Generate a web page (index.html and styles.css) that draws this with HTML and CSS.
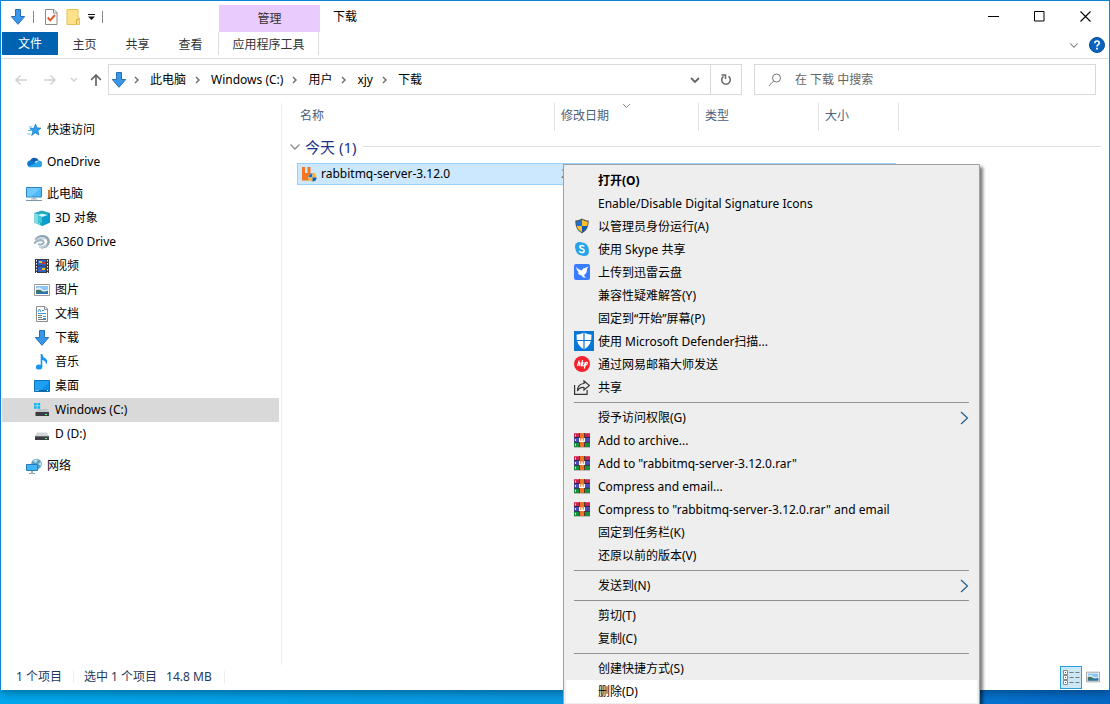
FILE: index.html
```
<!DOCTYPE html>
<html lang="zh-CN">
<head>
<meta charset="utf-8">
<title>下载</title>
<link rel="stylesheet" href="styles.css">
</head>
<body>
<svg class="defs" aria-hidden="true">
  <defs>
    <symbol id="down" viewBox="0 0 16 16"><path d="M5.5.5h5v7h4.2L8 15.3 1.3 7.5h4.2z" fill="#3a96e8" stroke="#2470b8"/></symbol>
    <symbol id="crumb" viewBox="0 0 8 8"><path d="M2 1l3 3-3 3" fill="none" stroke="#6a6a6a" stroke-width="1.4"/></symbol>
    <symbol id="chev" viewBox="0 0 12 8"><path d="M1.500 1.500L6 6l4.500-4.500" fill="none" stroke="currentColor" stroke-width="1.300"/></symbol>
    <symbol id="next" viewBox="0 0 9 14"><path d="M1 1l6.500 6L1 13" fill="none" stroke="#1c5f94" stroke-width="1.200"/></symbol>
    <symbol id="drive" viewBox="0 0 16 16"><path d="M3 6.500h10l2 3.500H1z" fill="#d3d5d9"/><path d="M1 10h14v4H1z" fill="#3b3d42"/><path d="M1 10h14v1H1z" fill="#686b70"/><path d="M11 12h2v1h-2z" fill="#5dff6a"/></symbol>
    <symbol id="photo" viewBox="0 0 16 16"><path d="M.5 2.500h15v11H.5z" fill="#fff" stroke="#9a9a9a"/><path d="M2 4h12v8H2z" fill="#8cc4f4"/><path d="M2 6.500q4-2 6 .5t6 0V9H2z" fill="#dcecf8"/><path d="M2 8q4-1 6 1t6-.5V12H2z" fill="#3e7566"/><path d="M2 11l12-1v2H2z" fill="#2b74b8"/></symbol>
    <symbol id="shield" viewBox="0 0 16 16"><path d="M8 .6Q5 2.600 1.300 2.600C1.200 9 3.500 13 8 15.400 12.500 13 14.800 9 14.700 2.600 11 2.600 8 .6 8 .6z" fill="#555"/><path d="M8 1.800Q5.500 3.500 2.300 3.700q0 2.300.5 4.300H8z" fill="#1a72d4"/><path d="M8 1.800q2.500 1.700 5.700 1.900 0 2.300-.5 4.300H8z" fill="#fdbf2d"/><path d="M2.800 8q1.200 4.200 5.200 6.300V8z" fill="#fdbf2d"/><path d="M13.200 8Q12 12.200 8 14.300V8z" fill="#0d5bb5"/></symbol>
    <symbol id="rar" viewBox="0 0 16 16"><path d="M0 1h16v4.700H0z" fill="#c8234f"/><path d="M0 5.700h16v4.600H0z" fill="#4b4db5"/><path d="M0 10.300h16V15H0z" fill="#178f3b"/><path d="M0 1h16v1H0z" fill="#e04a70"/><path d="M0 5h16v1H0zM0 9.700h16v1H0z" fill="#2b244c"/><path d="M6 1h4v14H6z" fill="#ed7428"/><path d="M5 1h1v14H5zM10 1h1v14h-1z" fill="#57372e"/><path d="M1 2.500h1v2H1zM1 7h1v2H1zM1 11.800h1v2H1z" fill="#ffe36a"/><path d="M5 6h1.200v2.800h1V6.500h1.600v2.300h1V6H11v4H5z" fill="#fff"/><path d="M0 15h16v.6H0z" fill="#9b9b9b"/></symbol>
  </defs>
</svg>

<main class="window">
  <header class="titlebar">
    <div class="quick">
      <svg class="i16"><use href="#down"/></svg>
      <i class="tick"></i>
      <button class="plain" aria-label="属性"><svg class="i16" viewBox="0 0 16 16"><path d="M2.500.5h8.500l3 3v12H2.500z" fill="#fff" stroke="#8a8a8a"/><path d="M10.500.5v3.500h3.500" fill="none" stroke="#8a8a8a"/><path d="M4.700 8.500l2.500 2.800L12 6" fill="none" stroke="#e05a28" stroke-width="2"/></svg></button>
      <button class="plain" aria-label="新建文件夹"><svg class="i16" viewBox="0 0 16 16"><path d="M2 .5h11V9h1.500v6.500H2z" fill="#fde08a" stroke="#e9c254"/><path d="M11.500 15V10.500h2.500" fill="none" stroke="#d9ad3c"/></svg></button>
      <button class="plain" aria-label="自定义快速访问工具栏"><svg class="drop" viewBox="0 0 7 6"><path d="M0 0h7v1H0zM0 2.500h7L3.500 6z" fill="#111"/></svg></button>
      <i class="tick"></i>
    </div>
    <div class="context">管理</div>
    <h1 class="title">下载</h1>
    <div class="controls">
      <button class="plain" aria-label="最小化"><svg viewBox="0 0 11 11"><path d="M0 5.500h11" stroke="#000"/></svg></button>
      <button class="plain" aria-label="最大化"><svg viewBox="0 0 11 11"><path d="M.5.5h9.500v9.500H.5z" fill="none" stroke="#000"/></svg></button>
      <button class="plain" aria-label="关闭"><svg viewBox="0 0 11 11"><path d="M.5.5l10 10M10.500.5l-10 10" stroke="#000" stroke-width="1.100"/></svg></button>
    </div>
  </header>

  <nav class="tabs">
    <button class="tab file-tab">文件</button>
    <button class="tab">主页</button>
    <button class="tab">共享</button>
    <button class="tab">查看</button>
    <button class="tab tool-tab">应用程序工具</button>
    <div class="tabs-end">
      <button class="plain" aria-label="展开功能区"><svg class="chev-small grey"><use href="#chev"/></svg></button>
      <button class="plain" aria-label="帮助"><svg class="i16" viewBox="0 0 16 16"><circle cx="8" cy="8" r="7.500" fill="#0a64bd" stroke="#084d93"/><path d="M5.800 6.200q0-2.200 2.200-2.200t2.200 2q0 1.200-1.200 1.900T8 9.700" fill="none" stroke="#fff" stroke-width="1.600"/><path d="M7.100 10.800h1.800v1.700H7.100z" fill="#fff"/></svg></button>
    </div>
  </nav>

  <div class="address">
    <div class="history">
      <button class="plain faint" aria-label="后退"><svg class="i12" viewBox="0 0 12 12"><path d="M12 6H1M5.500 1.500L1 6l4.500 4.500" fill="none" stroke="currentColor" stroke-width="1.400"/></svg></button>
      <button class="plain faint" aria-label="前进"><svg class="i12" viewBox="0 0 12 12"><path d="M0 6h11M6.500 1.500L11 6l-4.500 4.500" fill="none" stroke="currentColor" stroke-width="1.400"/></svg></button>
      <button class="plain faint" aria-label="最近浏览的位置"><svg class="tiny" viewBox="0 0 8 6"><path d="M1 1l3 3 3-3" fill="none" stroke="currentColor" stroke-width="1.400"/></svg></button>
      <button class="plain" aria-label="上移"><svg class="i12" viewBox="0 0 12 12"><path d="M6 12V1M1.200 5.800L6 1l4.800 4.800" fill="none" stroke="#666" stroke-width="1.700"/></svg></button>
    </div>
    <div class="path">
      <svg class="i16"><use href="#down"/></svg>
      <svg class="crumb"><use href="#crumb"/></svg>
      <a href="#pc">此电脑</a>
      <svg class="crumb"><use href="#crumb"/></svg>
      <a href="#c">Windows (C:)</a>
      <svg class="crumb"><use href="#crumb"/></svg>
      <a href="#users">用户</a>
      <svg class="crumb"><use href="#crumb"/></svg>
      <a href="#xjy">xjy</a>
      <svg class="crumb"><use href="#crumb"/></svg>
      <a href="#downloads">下载</a>
      <button class="plain expand" aria-label="以前的位置"><svg class="i10" viewBox="0 0 10 10"><path d="M1 3l4 4 4-4" fill="none" stroke="#666" stroke-width="1.800"/></svg></button>
      <button class="plain refresh" aria-label="刷新"><svg class="i12" viewBox="0 0 12 12"><path d="M8.500 2.400A4.300 4.300 0 1 1 3.500 2.400" fill="none" stroke="#6a6a6a" stroke-width="1.600"/><path d="M1.500 1h4v4" fill="none" stroke="#6a6a6a" stroke-width="1.500"/></svg></button>
    </div>
    <label class="search">
      <svg class="i14" viewBox="0 0 14 14"><circle cx="8.500" cy="5" r="4" fill="none" stroke="#777"/><path d="M5.600 8L1 12.800" stroke="#777"/></svg>
      <input type="search" aria-label="搜索" placeholder="在 下载 中搜索">
    </label>
  </div>

  <div class="body">
    <nav class="tree">
      <a href="#quick"><svg class="i16" viewBox="0 0 16 16"><path d="M9.500 2l1.500 3.900 4 .2-3.200 2.600 1.200 4.300-3.700-2.200-3.600 2.600 1.200-4.200L3.900 6.600 8 6.200z" fill="#2ba0ea" stroke="#1277c4" stroke-width=".7"/><path d="M3 5h3M2 8.500h3.500M1.500 12h3" stroke="#58bdf4"/></svg>快速访问</a>
      <a class="gap" href="#onedrive"><svg class="i16" viewBox="0 0 16 16"><path d="M4 7a4.700 4.700 0 0 1 8.800-.5Q8 7 4 12z" fill="#0a5fb4"/><path d="M3.700 6.500Q7 6 11 10l-7 3.300A3.500 3.500 0 0 1 3.700 6.500z" fill="#0f78d0"/><path d="M2 12.500L9 9.500l3.800-3a3.400 3.400 0 0 1 .2 6.800H3.500z" fill="#2aa5ea"/></svg>OneDrive</a>
      <a class="gap" href="#pc"><svg class="i16" viewBox="0 0 16 16"><path d="M.5 1.500h15v9.500H.5z" fill="#4db9fa" stroke="#2c84be"/><path d="M1 2h14L5 10.500H1z" fill="#7bd0ff" opacity=".7"/><path d="M7 11.500h2V13H7z" fill="#8ab"/><path d="M0 14.500h16" stroke="#8195aa"/><path d="M5 13h6" stroke="#9cb0c4"/></svg>此电脑</a>
      <a class="sub" href="#3d"><svg class="i16" viewBox="0 0 16 16"><path d="M0 3l8-2.500L16 3v9.500L8 16 0 12.500z" fill="#26aabd"/><path d="M0 3l6 2v10L0 12.500z" fill="#82dbe2"/><path d="M16 3v9.500L8 16V5.500z" fill="#0b9dcb"/><path d="M4 5l4-1.200L14 5 8 7z" fill="#d8fbfb"/><path d="M4 5l4 2v5l-4 2z" fill="#42c8d4"/></svg>3D 对象</a>
      <a class="sub" href="#a360"><svg class="i16" viewBox="0 0 16 16"><path d="M1.500 6Q5 1.500 10.500 2.500 15 4 14.500 8.500 13 13.500 7 13.500" fill="none" stroke="#8fa5b4" stroke-width="2.600"/><path d="M2 6.500Q6 2.500 11.500 5" fill="none" stroke="#cbd8e0" stroke-width="1.800"/><path d="M0 9.500Q4 5 8.500 6.500q2.500 1.500 0 3.500Q5 11.500 4.500 9.500" fill="none" stroke="#9db1be" stroke-width="2"/><path d="M5 13q5 1 8-3" fill="none" stroke="#c3d1da" stroke-width="1.500"/></svg>A360 Drive</a>
      <a class="sub" href="#video"><svg class="i16" viewBox="0 0 16 16"><path d="M1 1h14v14H1z" fill="#38393b"/><path d="M4 2h8v5.500H4zM4 8.500h8V14H4z" fill="#2d62cc"/><path d="M5 3h3v2H5zM8 10h3v2H8z" fill="#e0be25"/><path d="M8 4h3v2H8zM5 12h3v1H5z" fill="#c8372e"/><path d="M2.500 2v13M13.500 2v13" stroke="#f2f2f2" stroke-dasharray="1.500 1.500"/></svg>视频</a>
      <a class="sub" href="#pictures"><svg class="i16"><use href="#photo"/></svg>图片</a>
      <a class="sub" href="#docs"><svg class="i16" viewBox="0 0 16 16"><path d="M2.500.5h8.500l2.500 2.500v12.500h-11z" fill="#fff" stroke="#8d8d8d"/><path d="M10.500.5v3h3" fill="none" stroke="#8d8d8d"/><path d="M4 6l1.500-3L7 6M8 4.500h2M4 7.500h8M9 12.500h3M9 10.500h3" fill="none" stroke="#3597dd"/><path d="M4 9.500h4M4 11.500h4M4 13.500h8" stroke="#777"/></svg>文档</a>
      <a class="sub" href="#downloads"><svg class="i16"><use href="#down"/></svg>下载</a>
      <a class="sub" href="#music"><svg class="i16" viewBox="0 0 16 16"><ellipse cx="5" cy="13" rx="3.200" ry="2.600" fill="#1597f2"/><path d="M6.700 13V0h1.500q.5 3 3 4.300T13 9l-1 1.500Q12 6.500 8.300 6V13z" fill="#1597f2"/></svg>音乐</a>
      <a class="sub" href="#desktop"><svg class="i16" viewBox="0 0 16 16"><path d="M.5 2.500h15v11H.5z" fill="#1ea1f5" stroke="#0a71b9"/><path d="M6 13L15 4v9z" fill="#0e91e8"/><path d="M1 12.500h14" stroke="#07619e"/><path d="M1.500 12.500h3M13 12.500h1" stroke="#fff" stroke-dasharray="1 1"/></svg>桌面</a>
      <a class="sub current" href="#c"><svg class="i16" viewBox="0 0 16 16"><path d="M4 7h10l1 3H1.500z" fill="#c3c5c9"/><path d="M1.500 10h13.500v4H1.500z" fill="#3b3d42"/><path d="M11 12h2v1h-2z" fill="#5dff6a"/><path d="M0 1h2.700v2.500H0zM3.500 1h2.700v2.500H3.500zM0 4.300h2.700v2.500H0zM3.500 4.300h2.700v2.500H3.500z" fill="#0ab4ee"/></svg>Windows (C:)</a>
      <a class="sub" href="#d"><svg class="i16"><use href="#drive"/></svg>D (D:)</a>
      <a class="gap" href="#network"><svg class="i16" viewBox="0 0 16 16"><circle cx="10.500" cy="6" r="5.300" fill="#5d9fc0"/><path d="M7 3q3-3 5-1l-2 3zM12 6l3-2v4z" fill="#c2e0e8"/><path d="M.5 6.500h11v6H.5z" fill="#42b4f8" stroke="#267eb8"/><path d="M3 15.500h6" stroke="#8fa6b6"/><path d="M5 13h2v2H5z" fill="#9fb5c4"/></svg>网络</a>
    </nav>

    <table class="files">
      <thead>
        <tr>
          <th scope="col">名称</th>
          <th scope="col">修改日期<svg class="sort"><use href="#chev"/></svg></th>
          <th scope="col">类型</th>
          <th scope="col">大小</th>
        </tr>
      </thead>
      <tbody>
        <tr class="group"><th scope="rowgroup"><svg class="chev grey"><use href="#chev"/></svg>今天 (1)</th></tr>
        <tr class="file">
          <td><svg class="i16" viewBox="0 0 16 16"><path d="M1 1h3v6h2.500V1h3v6H14v7.500H1z" fill="#f5761f"/><circle cx="11.500" cy="11.500" r="4.300" fill="#d7e3ee"/><path d="M11.500 7.500a4 4 0 0 0-4 4h4z" fill="#1a72d4"/><path d="M11.500 7.500a4 4 0 0 1 4 4h-4zM7.500 11.500a4 4 0 0 0 4 4v-4z" fill="#fbbd2b"/><path d="M15.500 11.500a4 4 0 0 1-4 4v-4z" fill="#0d5bb5"/></svg>rabbitmq-server-3.12.0</td>
          <td class="date">2</td><td></td><td></td>
        </tr>
      </tbody>
    </table>
  </div>

  <footer class="status">
    <span class="count">1 个项目</span>
    <span class="picked">选中 1 个项目</span>
    <span class="size">14.8 MB</span>
    <button class="plain view on" aria-label="详细信息"><svg viewBox="0 0 17 15"><path d="M.5.500h4v4h-4zM.5 5.500h4v4h-4zM.5 10.500h4v4h-4z" fill="#fff" stroke="#888"/><path d="M6.500 2.500h4M12.500 2.500h4M6.500 7.500h4M12.500 7.500h4M6.500 12.500h4M12.500 12.500h4" stroke="#777"/><path d="M2 2h1v1H2zM2 7h1v1H2z" fill="#1873ca"/><path d="M2 12h1v1H2z" fill="#c22"/></svg></button>
    <button class="plain view" aria-label="大图标"><svg class="i14"><use href="#photo"/></svg></button>
  </footer>
</main>

<div class="menu" role="menu">
  <button role="menuitem"><i></i><b>打开(O)</b></button>
  <button role="menuitem"><i></i>Enable/Disable Digital Signature Icons</button>
  <button role="menuitem"><i><svg class="i16"><use href="#shield"/></svg></i>以管理员身份运行(A)</button>
  <button role="menuitem"><i><svg class="i16" viewBox="0 0 16 16"><circle cx="5.500" cy="5.500" r="4.500" fill="#27a3ea"/><circle cx="10.500" cy="10.500" r="4.500" fill="#27a3ea"/><circle cx="8" cy="8" r="6.500" fill="#27a3ea"/><path d="M10.300 5.500Q9.800 4.400 8 4.400q-2.100 0-2.100 1.600c0 2.200 4.300 1.300 4.300 3.700 0 1.300-1 1.900-2.300 1.900-1.500 0-2.300-.7-2.500-1.700" fill="none" stroke="#fff" stroke-width="1.500"/></svg></i>使用 Skype 共享</button>
  <button role="menuitem"><i><svg class="i16" viewBox="0 0 16 16"><rect width="16" height="16" rx="2" fill="#3a7cff"/><path d="M2 3q2.500 3 5.500 3.500Q9 4 11.500 3.800L14.500 2.500q-1 1.200-1.500 2.500 0 4.500-3 6 .5 1.800 2 2.800Q8.500 14 7.500 11.500 4.500 11 3.500 8.800L5 8.500Q2.500 6.500 2 3z" fill="#fff"/></svg></i>上传到迅雷云盘</button>
  <button role="menuitem"><i></i>兼容性疑难解答(Y)</button>
  <button role="menuitem"><i></i>固定到“开始”屏幕(P)</button>
  <button role="menuitem"><i><svg class="i20" viewBox="0 0 20 20"><path d="M0 0h20v20H0z" fill="#0877d8"/><path d="M10 1.500Q7 3.500 2.500 3.700 2 14 10 18.500 18 14 17.500 3.700 13 3.500 10 1.500z" fill="#fff"/><path d="M10 1v18M2 9.500h16" stroke="#0877d8" stroke-width="1.200"/></svg></i>使用 Microsoft Defender扫描...</button>
  <button role="menuitem"><i><svg class="i16" viewBox="0 0 16 16"><circle cx="8" cy="8" r="8" fill="#f5222d"/><path d="M5.200 4.500L3.500 10M4.300 7.500q2-2 1.500 0L5 10M8 6.200L7 9.200q0 1.200 1.200.4L9.200 6.200M9 9.500q1 .8 1.500-.5l.8-2.800M10.300 12.500L12 6.500q1.500-.5 1.300 1T11.300 9.600M8.600 4L7 10" fill="none" stroke="#fff" stroke-width="1.100"/></svg></i>通过网易邮箱大师发送</button>
  <button role="menuitem"><i><svg class="i16" viewBox="0 0 16 16"><path d="M.6 6v9.400h12.500V11" fill="none" stroke="#333" stroke-width="1.200"/><path d="M10 2l5.500 4.500L10 11V8.500Q5.500 8 3.500 12 3.500 5 10 4.500z" fill="none" stroke="#333" stroke-width="1.200"/></svg></i>共享</button>
  <hr>
  <button role="menuitem"><i></i>授予访问权限(G)<svg class="next"><use href="#next"/></svg></button>
  <button role="menuitem"><i><svg class="i16"><use href="#rar"/></svg></i>Add to archive...</button>
  <button role="menuitem"><i><svg class="i16"><use href="#rar"/></svg></i>Add to "rabbitmq-server-3.12.0.rar"</button>
  <button role="menuitem"><i><svg class="i16"><use href="#rar"/></svg></i>Compress and email...</button>
  <button role="menuitem"><i><svg class="i16"><use href="#rar"/></svg></i>Compress to "rabbitmq-server-3.12.0.rar" and email</button>
  <button role="menuitem"><i></i>固定到任务栏(K)</button>
  <button role="menuitem"><i></i>还原以前的版本(V)</button>
  <hr>
  <button role="menuitem"><i></i>发送到(N)<svg class="next"><use href="#next"/></svg></button>
  <hr>
  <button role="menuitem"><i></i>剪切(T)</button>
  <button role="menuitem"><i></i>复制(C)</button>
  <hr>
  <button role="menuitem"><i></i>创建快捷方式(S)</button>
  <button role="menuitem" class="hot"><i></i>删除(D)</button>
</div>
</body>
</html>
```
FILE: styles.css
```
* { box-sizing: border-box; }
html { height: 100%; overflow: hidden; }
body {
  margin: 0;
  height: 100%;
  overflow: hidden;
  position: relative;
  background: linear-gradient(90deg, #00a8ee, #0a98e2 50%, #0672d0 90%, #0568c4);
  font-family: "Noto Sans", "Noto Sans CJK SC", sans-serif;
  font-size: 12px;
  line-height: 18px;
  color: #000;
}
svg { display: block; flex: none; }
a { color: inherit; text-decoration: none; }
button, input { font: inherit; color: inherit; border: 0; background: none; padding: 0; }
button { white-space: nowrap; }
.defs { position: absolute; width: 0; height: 0; }
.plain { display: flex; align-items: center; justify-content: center; }
.i10 { width: 10px; height: 10px; }
.i12 { width: 12px; height: 12px; }
.i14 { width: 14px; height: 14px; }
.i16 { width: 16px; height: 16px; }
.i20 { width: 20px; height: 20px; }
.chev { width: 12px; height: 8px; }
.chev-small { width: 10px; height: 7px; }
.tiny { width: 8px; height: 6px; }
.grey { color: #8a8a8a; }
.faint { color: #cfcfcf; }

.window {
  display: flex;
  flex-direction: column;
  height: calc(100% - 14px);
  background: #fff;
  border: 1px solid #0a84d4;
  border-bottom: 0;
  box-shadow: 0 2px 10px rgba(0, 0, 0, .4);
}

.titlebar { display: flex; height: 31px; flex: none; }
.quick { display: flex; align-items: center; width: 218px; padding-left: 9px; gap: 7px; }
.tick { width: 1px; height: 12px; background: #888; }
.quick .plain:nth-of-type(1) { margin-left: 2px; }
.quick .plain:nth-of-type(2) { margin-left: -1px; }
.drop { width: 7px; height: 6px; }
.context { width: 101px; margin-top: 4px; background: #e9cbfd; color: #333; text-align: center; line-height: 27px; }
.title { margin: 0 0 0 13px; font-size: 12px; font-weight: 400; line-height: 31px; }
.controls { display: flex; margin-left: auto; padding-right: 1px; }
.controls button { width: 46px; }
.controls svg { width: 11px; height: 11px; }

.tabs { display: flex; height: 27px; flex: none; border-bottom: 1px solid #dadbdc; margin: 0 1px; }
.tab { width: 53px; height: 23px; padding-top: 2px; color: #333; }
.file-tab { width: 56px; padding-top: 0; background: #0063b1; color: #fff; }
.tool-tab { width: 101px; margin-left: 1px; border: solid #ddd; border-width: 0 1px; }
.tabs-end { display: flex; align-items: center; gap: 10px; margin-left: auto; padding-right: 3px; }

.address { display: flex; height: 42px; flex: none; padding: 5px 13px 6px 0; color: #333; }
.history { display: flex; flex: none; align-items: center; width: 107px; padding-left: 14px; gap: 17px; }
.history .tiny { margin: 0 -5px 0 -4px; }
.path { display: flex; flex: 1 1 634px; align-items: center; border: 1px solid #d9d9d9; padding-left: 2px; color: #000; }
.crumb { width: 8px; height: 8px; margin: 0 9px 0 8px; }
.path .i16 + .crumb { margin-left: 6px; }
.expand { width: 30px; margin-left: auto; }
.refresh { width: 31px; align-self: stretch; border-left: 1px solid #d9d9d9; }
.search { display: flex; flex: 1 1 342px; align-items: center; margin-left: 12px; padding: 0 13px; gap: 13px; border: 1px solid #d9d9d9; }
.search input { flex: 1; min-width: 0; outline: 0; }
.search input::placeholder { color: #666; opacity: 1; }

.body { display: flex; flex: 1; min-height: 0; padding-top: 2px; }
.tree { display: flex; flex-direction: column; width: 281px; flex: none; padding: 15px 2px 0 1px; border-right: 1px solid #f0f0f0; }
.tree a { display: flex; align-items: center; height: 24px; gap: 5px; padding-left: 24px; }
.tree .gap { margin-top: 8px; }
.tree .sub { padding-left: 32px; }
.tree .current { background: #d9d9d9; }

.files { display: block; flex: 1; min-width: 0; padding: 0 8px 0 15px; }
.files thead, .files tbody { display: block; }
.files tr { display: grid; grid-template-columns: 258px 144px 120px 80px; }
.files th, .files td { padding: 0; font-weight: 400; text-align: left; }
.files thead th { position: relative; height: 28px; padding-left: 6px; border-right: 1px solid #e3e3e3; color: #4c607a; line-height: 26px; }
.files thead th:first-child { padding-left: 3px; }
.sort { position: absolute; left: 67px; top: 0; width: 9px; height: 6px; color: #888; }
.files .group { display: block; margin-left: -8px; }
.group th { display: flex; align-items: center; gap: 4px; height: 33px; padding-bottom: 2px; color: #1e3287; font-size: 15px; line-height: 20px; }
.group th::after { content: ""; flex: 1; height: 1px; margin-left: 3px; background: #e0e0e0; }
.files .file { width: 599px; grid-template-columns: 257px 144px 120px 1fr; height: 22px; margin-top: -1px; background: #cce8ff; outline: 1px solid #99d1ff; outline-offset: -1px; }
.file td { display: flex; align-items: center; gap: 4px; padding-left: 4px; }
.file .date { padding-left: 7px; color: #777; }

.status { display: flex; align-items: center; flex: none; height: 25px; padding: 0 9px 1px 15px; color: #1e395b; }
.status span { line-height: 12px; }
.count { width: 58px; border-right: 1px solid #eee; }
.picked { padding-left: 10px; }
.size { margin-left: 9px; padding-right: 12px; border-right: 1px solid #eee; }
.view { width: 14px; height: 23px; margin-left: 4px; }
.view.on { width: 22px; margin-left: auto; background: #cce8f6; border: 1px solid #26a0da; }
.view.on svg { width: 17px; height: 15px; }

.menu {
  position: absolute;
  left: 563px;
  top: 164px;
  width: 417px;
  display: flex;
  flex-direction: column;
  padding: 4px 2px;
  background: #eee;
  border: 1px solid #a0a0a0;
  box-shadow: 3px 3px 3px rgba(0, 0, 0, .5);
}
.menu button { display: flex; align-items: center; height: 23px; padding: 0 8px; text-align: left; }
.menu i { width: 24px; flex: none; padding-bottom: 2px; }
.menu .hot { background: #fff; }
.menu hr { width: 395px; height: 1px; margin: 3px 8px; border: 0; background: #919191; }
.next { width: 9px; height: 14px; margin-left: auto; }
```
